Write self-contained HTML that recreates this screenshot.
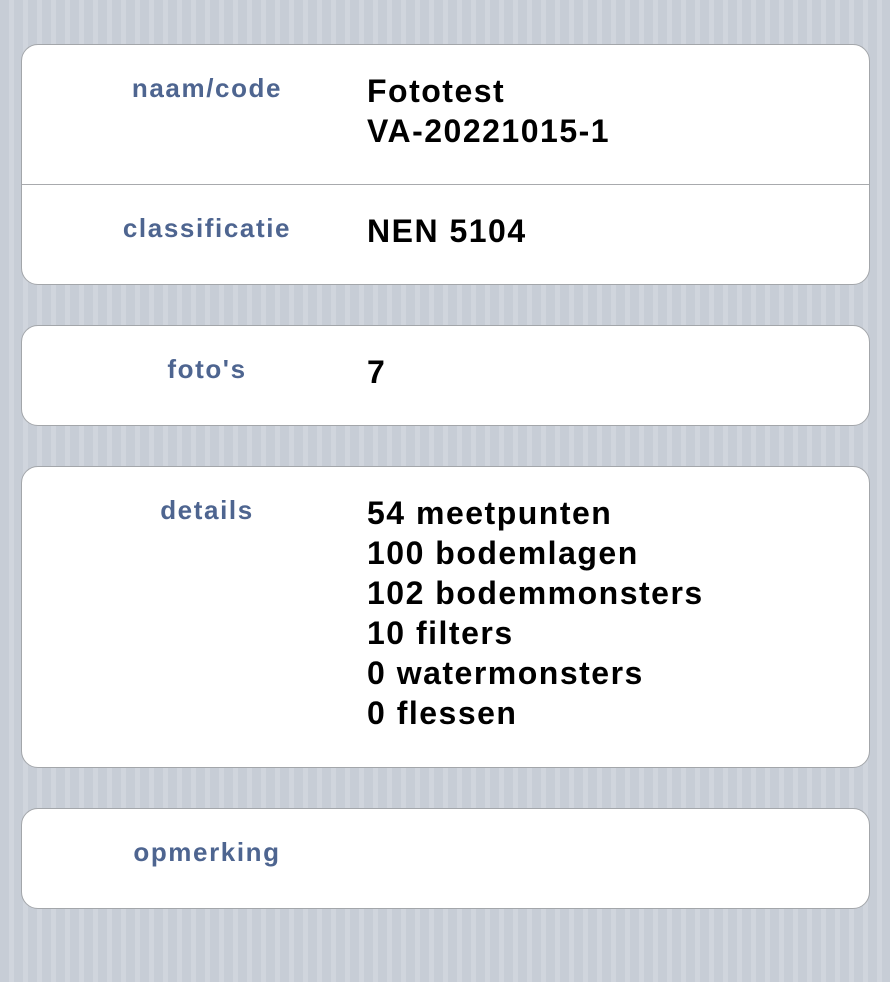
<!DOCTYPE html><html><head><style>
body{margin:0;width:890px;height:982px;overflow:hidden;background:repeating-linear-gradient(90deg,#c7cdd6 0,#c7cdd6 9px,#d0d5dd 9px,#d0d5dd 14px);font-family:"Liberation Sans",sans-serif;position:relative}
.card{position:absolute;left:21px;width:849px;background:#fff;border:1.5px solid #a3a6aa;border-radius:17px;box-sizing:border-box}
.lab{position:absolute;left:95px;width:180px;text-align:center;color:#4e6590;font-weight:bold;font-size:26px;letter-spacing:1.6px}
.val{position:absolute;left:345px;font-weight:bold;font-size:32px;letter-spacing:1.5px;line-height:40px;color:#000;white-space:nowrap}
.div{position:absolute;left:0;right:0;top:139px;border-top:1.5px solid #a8aaad}
</style></head><body>
<div class="card" style="top:44px;height:241px">
<div class="lab" style="top:28px">naam/code</div>
<div class="val" style="top:26px">Fototest<br>VA-20221015-1</div>
<div class="div"></div>
<div class="lab" style="top:168px">classificatie</div>
<div class="val" style="top:166px">NEN 5104</div>
</div>
<div class="card" style="top:325px;height:101px">
<div class="lab" style="top:28px">foto's</div>
<div class="val" style="top:26px">7</div>
</div>
<div class="card" style="top:466px;height:302px">
<div class="lab" style="top:28px">details</div>
<div class="val" style="top:26px">54 meetpunten<br>100 bodemlagen<br>102 bodemmonsters<br>10 filters<br>0 watermonsters<br>0 flessen</div>
</div>
<div class="card" style="top:808px;height:101px">
<div class="lab" style="top:28px">opmerking</div>
</div>
</body></html>
